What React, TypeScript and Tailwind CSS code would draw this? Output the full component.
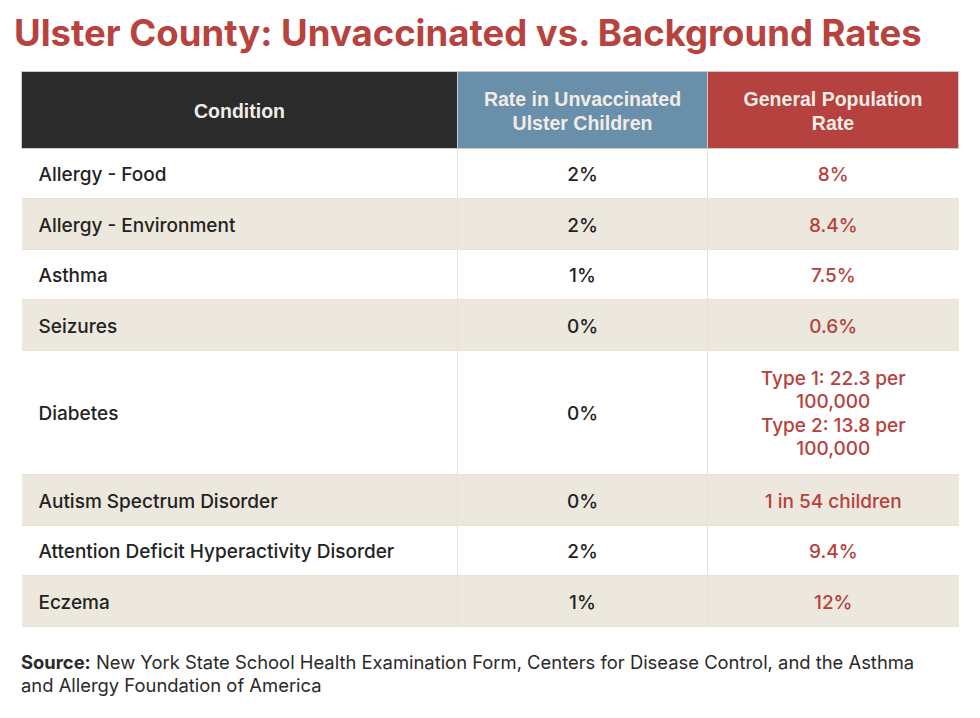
const rows: { condition: string; unvax: string; general: string[] }[] = [
  { condition: 'Allergy - Food', unvax: '2%', general: ['8%'] },
  { condition: 'Allergy - Environment', unvax: '2%', general: ['8.4%'] },
  { condition: 'Asthma', unvax: '1%', general: ['7.5%'] },
  { condition: 'Seizures', unvax: '0%', general: ['0.6%'] },
  {
    condition: 'Diabetes',
    unvax: '0%',
    general: ['Type 1: 22.3 per', '100,000', 'Type 2: 13.8 per', '100,000'],
  },
  { condition: 'Autism Spectrum Disorder', unvax: '0%', general: ['1 in 54 children'] },
  { condition: 'Attention Deficit Hyperactivity Disorder', unvax: '2%', general: ['9.4%'] },
  { condition: 'Eczema', unvax: '1%', general: ['12%'] },
];

export default function App() {
  return (
    <div className="min-h-[718px] w-[980px] bg-white font-['Inter',sans-serif]">
      <h1 className="pl-[14px] pt-[11px] text-[36.5px] font-bold leading-[44px] text-[#b7423e]">
        Ulster County: Unvaccinated vs. Background Rates
      </h1>

      <div className="mx-[21px] mt-[16px]">
        <table className="w-full border-collapse text-[19px] leading-[23.5px]">
          <thead className="font-['Liberation_Sans',sans-serif] text-[19.5px] leading-[24px] font-bold text-[#f1ede6]">
            <tr>
              <th className="w-[436px] border border-[#cfcac2] bg-[#2b2b2b] pt-[15px] pb-[12.5px] font-bold">
                Condition
              </th>
              <th className="w-[250px] border border-[#cfcac2] bg-[#6a8fab] pt-[15px] pb-[12.5px] font-bold">
                Rate in Unvaccinated
                <br />
                Ulster Children
              </th>
              <th className="border border-[#cfcac2] bg-[#b5423e] pt-[15px] pb-[12.5px] font-bold">
                General Population
                <br />
                Rate
              </th>
            </tr>
          </thead>
          <tbody>
            {rows.map((row, i) => {
              const pad = row.general.length > 1 ? 'pt-[16px] pb-[13.5px]' : 'pt-[14.5px] pb-[11.5px]';
              return (
                <tr key={row.condition} className={i % 2 === 1 ? 'bg-[#ede8dd]' : 'bg-white'}>
                  <td className={`border-b border-[#e9e1d3] pl-[17px] font-medium text-[#232323] ${pad}`}>
                    {row.condition}
                  </td>
                  <td className={`border-b border-l border-[#e9e1d3] text-center font-medium text-[#232323] ${pad}`}>
                    {row.unvax}
                  </td>
                  <td className={`border-b border-l border-[#e9e1d3] text-center font-medium text-[#b8403c] ${pad}`}>
                    {row.general.map((line, j) => (
                      <div key={j}>{line}</div>
                    ))}
                  </td>
                </tr>
              );
            })}
          </tbody>
        </table>

        <p className="mt-[24px] max-w-[915px] text-[18.4px] leading-[23px] text-[#2a2a2a]">
          <span className="font-bold">Source:</span> New York State School Health Examination Form, Centers for
          Disease Control, and the Asthma and Allergy Foundation of America
        </p>
      </div>
    </div>
  );
}
